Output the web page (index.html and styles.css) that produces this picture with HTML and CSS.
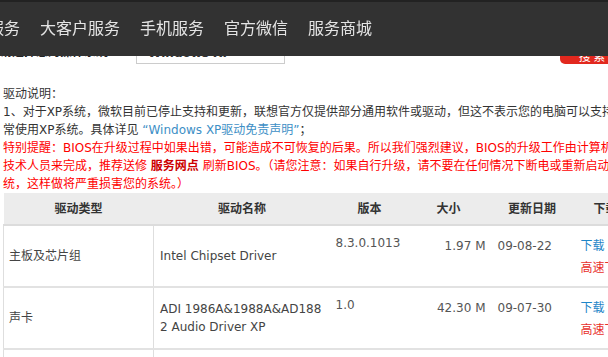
FILE: index.html
```html
<!DOCTYPE html>
<html lang="zh-CN">
<head>
<meta charset="UTF-8">
<meta name="viewport" content="width=device-width, initial-scale=1.0">
<title>驱动下载</title>
<link rel="stylesheet" href="styles.css">
</head>
<body>

<!-- 顶部导航 -->
<div class="topbar">
    <ul class="nav">
        <li>个人服务</li>
        <li>大客户服务</li>
        <li>手机服务</li>
        <li>官方微信</li>
        <li>服务商城</li>
    </ul>
</div>

<div class="page">
    <!-- 系统选择 -->
    <div class="search-row">
        <span class="search-label">请选择您的操作系统：</span>
        <div class="os-select">Windows XP</div>
        <button class="search-btn">搜 索</button>
    </div>

    <!-- 驱动说明 -->
    <div class="notes">
        <p>驱动说明：</p>
        <p>1、对于XP系统，微软目前已停止支持和更新，联想官方仅提供部分通用软件或驱动，但这不表示您的电脑可以支持正</p>
        <p>常使用XP系统。具体详见 <a href="#" class="note-link">“Windows XP驱动免责声明”</a>；</p>
        <p class="warn">特别提醒：BIOS在升级过程中如果出错，可能造成不可恢复的后果。所以我们强烈建议，BIOS的升级工作由计算机</p>
        <p class="warn">技术人员来完成，推荐送修 <b>服务网点</b> 刷新BIOS。（请您注意：如果自行升级，请不要在任何情况下断电或重新启动系</p>
        <p class="warn">统，这样做将严重损害您的系统。）</p>
    </div>

    <!-- 驱动列表 -->
    <table class="driver-table">
        <colgroup>
            <col style="width:150px">
            <col style="width:177px">
            <col style="width:78px">
            <col style="width:80px">
            <col style="width:87px">
            <col style="width:60px">
        </colgroup>
        <tr class="head">
            <th>驱动类型</th>
            <th>驱动名称</th>
            <th>版本</th>
            <th>大小</th>
            <th>更新日期</th>
            <th>下载</th>
        </tr>
        <tr>
            <td class="type">主板及芯片组</td>
            <td class="name">Intel Chipset Driver</td>
            <td class="ver">8.3.0.1013</td>
            <td class="size">1.97 M</td>
            <td class="date">09-08-22</td>
            <td class="dl"><a href="#">下载</a><a href="#" class="fast">高速下载</a></td>
        </tr>
        <tr>
            <td class="type">声卡</td>
            <td class="name">ADI 1986A&amp;1988A&amp;AD1882 Audio Driver XP</td>
            <td class="ver">1.0</td>
            <td class="size">42.30 M</td>
            <td class="date">09-07-30</td>
            <td class="dl"><a href="#">下载</a><a href="#" class="fast">高速下载</a></td>
        </tr>
        <tr>
            <td class="type">显卡</td>
            <td class="name">Intel Graphics Driver</td>
            <td class="ver">6.14.10.4906</td>
            <td class="size">12.85 M</td>
            <td class="date">09-07-30</td>
            <td class="dl"><a href="#">下载</a><a href="#" class="fast">高速下载</a></td>
        </tr>
    </table>
</div>

</body>
</html>
```

FILE: styles.css
```css
/* 基本样式 */
html, body {
    margin: 0;
    overflow: hidden;
    background: #fff;
}

body {
    font: 12px/18px "DejaVu Sans", "Noto Sans CJK SC", sans-serif;
    color: #333;
}

a {
    text-decoration: none;
}

/* 顶部导航 */
.topbar {
    position: fixed;
    top: 0;
    left: 0;
    right: 0;
    height: 54px;
    border-top: 2px solid #222;
    background: #323232;
    z-index: 10;
}

.nav {
    list-style: none;
    margin: 0 0 0 -44px;
    padding: 0;
    height: 50px;
    display: flex;
    align-items: center;
    gap: 20px;
}

.nav li {
    font: 16px/20px "Noto Sans CJK SC", sans-serif;
    color: #e4e4e4;
    white-space: nowrap;
}

/* 页面内容 */
.page {
    width: 640px;
    padding: 38px 0 0 3px;
}

.search-row {
    display: flex;
    height: 26px;
}

.search-label {
    align-self: flex-end;
    width: 136px;
    margin-left: -3px;
    padding-bottom: 5px;
    line-height: 14px;
    font-weight: bold;
    color: #222;
    white-space: nowrap;
}

.os-select {
    box-sizing: border-box;
    width: 149px;
    height: 26px;
    padding: 4px 0 0 11px;
    border: 1px solid #ccc;
    font-weight: bold;
    line-height: 20px;
    color: #333;
}

.search-btn {
    margin-left: 275px;
    width: 64px;
    height: 26px;
    padding: 10px 0 0;
    border: none;
    border-radius: 5px;
    background: #e2281e;
    color: #fff;
    font: 12px/14px "Noto Sans CJK SC", sans-serif;
}

/* 驱动说明 */
.notes {
    margin-top: 21px;
}

.notes p {
    margin: 0;
    white-space: nowrap;
}

.note-link {
    color: #3d8fc6;
}

.warn {
    color: #f00;
}

.warn b {
    color: #c00;
}

/* 驱动列表 */
.driver-table {
    width: 632px;
    table-layout: fixed;
    border-collapse: collapse;
}

.driver-table tr {
    height: 62px;
}

.driver-table tr.head {
    height: 32px;
}

.driver-table th {
    padding: 0;
    background: #ececec;
    border-bottom: 2px solid #dcdcdc;
    font-weight: bold;
    color: #333;
    text-align: center;
}

.driver-table td {
    padding: 0;
    border-bottom: 2px solid #e2e2e2;
    color: #444;
}

.driver-table td.type {
    padding-left: 5px;
    border-left: 1px solid #dedede;
    border-right: 1px solid #dedede;
    vertical-align: middle;
}

.driver-table td.name {
    padding: 0 6px;
    word-break: break-all;
    vertical-align: middle;
}

.driver-table td.ver {
    padding: 8px 0 0 5px;
    vertical-align: top;
    color: #555;
}

.driver-table td.size {
    padding: 11px 3px 0 0;
    text-align: right;
    vertical-align: top;
    color: #555;
}

.driver-table td.date {
    padding: 11px 0 0 9px;
    vertical-align: top;
    color: #555;
}

.driver-table td.dl {
    padding: 9px 0 0 5px;
    vertical-align: top;
}

.dl a {
    display: block;
    line-height: 22px;
    color: #1f86c8;
}

.dl a.fast {
    color: #e8302a;
}
```
